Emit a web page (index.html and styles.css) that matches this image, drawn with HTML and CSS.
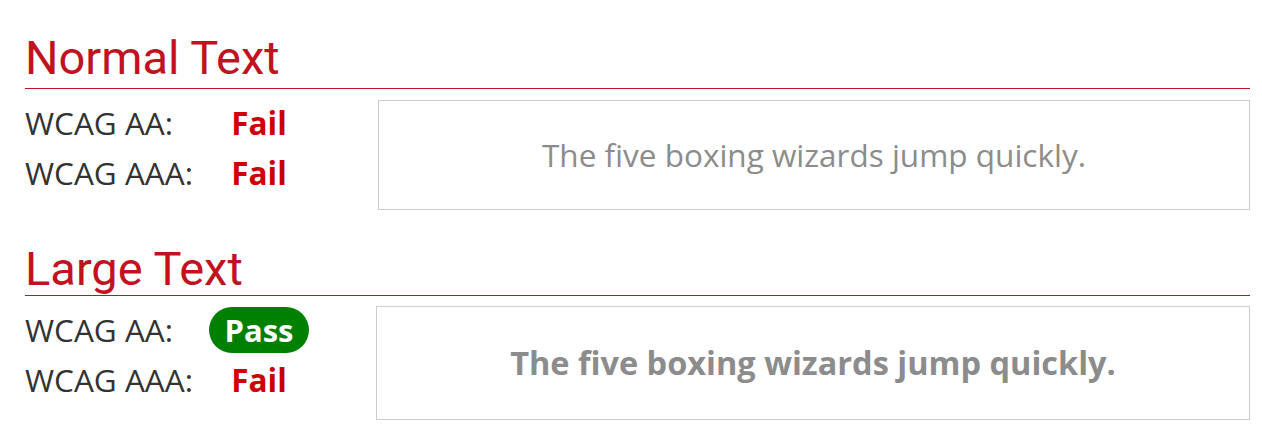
FILE: index.html
```html
<!DOCTYPE html>
<html>
<head>
<meta charset="utf-8">
<link rel="stylesheet" href="styles.css">
</head>
<body>
<div class="page">
  <section class="section section-normal">
    <h2 class="heading">Normal Text</h2>
    <div class="content">
      <div class="results">
        <div class="label">WCAG AA:</div>
        <div class="result"><span class="fail">Fail</span></div>
        <div class="label">WCAG AAA:</div>
        <div class="result"><span class="fail">Fail</span></div>
      </div>
      <div class="sample sample-normal">The five boxing wizards jump quickly.</div>
    </div>
  </section>
  <section class="section section-large">
    <h2 class="heading">Large Text</h2>
    <div class="content">
      <div class="results">
        <div class="label">WCAG AA:</div>
        <div class="result"><span class="pass">Pass</span></div>
        <div class="label">WCAG AAA:</div>
        <div class="result"><span class="fail">Fail</span></div>
      </div>
      <div class="sample sample-large">The five boxing wizards jump quickly.</div>
    </div>
  </section>
</div>
</body>
</html>
```

FILE: styles.css
```css
html, body {
  margin: 0;
  padding: 0;
  background: #ffffff;
}

.page {
  padding: 0 12px 0 25px;
  font-family: "Open Sans", "Liberation Sans", sans-serif;
  color: #333333;
}

.section-normal {
  padding-top: 30px;
}

.section-large {
  padding-top: 34px;
}

.heading {
  margin: 0;
  font-family: Roboto, "Liberation Sans", sans-serif;
  font-weight: 400;
  font-size: 47px;
  line-height: 56px;
  color: #c1121f;
  padding-bottom: 2px;
  border-bottom: 1px solid #c1121f;
}

.section-large .heading {
  line-height: 50px;
  padding-bottom: 1px;
  border-bottom-color: #b31b22;
}

.content {
  display: flex;
  align-items: flex-start;
  padding-top: 9px;
}

.section-large .content {
  padding-top: 8px;
}

.results {
  display: grid;
  grid-template-columns: 184px 100px;
  grid-auto-rows: 50px;
  align-items: center;
  flex: none;
  margin-right: 69px;
}

.section-large .results {
  grid-auto-rows: 51px 50px;
  margin-right: 67px;
}

.label {
  font-size: 31.5px;
  line-height: 50px;
  color: #333333;
}

.result {
  display: flex;
  justify-content: center;
  align-items: center;
}

.fail {
  font-size: 31.5px;
  line-height: 50px;
  font-weight: 700;
  color: #cc0000;
}

.pass {
  display: flex;
  align-items: center;
  justify-content: center;
  width: 100px;
  height: 46px;
  border-radius: 23px;
  background: #008000;
  color: #ffffff;
  font-size: 31px;
  font-weight: 700;
  line-height: 46px;
}

.sample {
  flex: 1;
  display: flex;
  align-items: center;
  justify-content: center;
  border: 1px solid #cccccc;
  color: #8c8c8c;
  font-size: 31.5px;
  line-height: 50px;
  box-sizing: border-box;
}

.sample-normal {
  height: 110px;
  margin-top: 2px;
}

.sample-large {
  height: 114px;
  margin-top: 2px;
  font-size: 32.5px;
  font-weight: 700;
}
```
